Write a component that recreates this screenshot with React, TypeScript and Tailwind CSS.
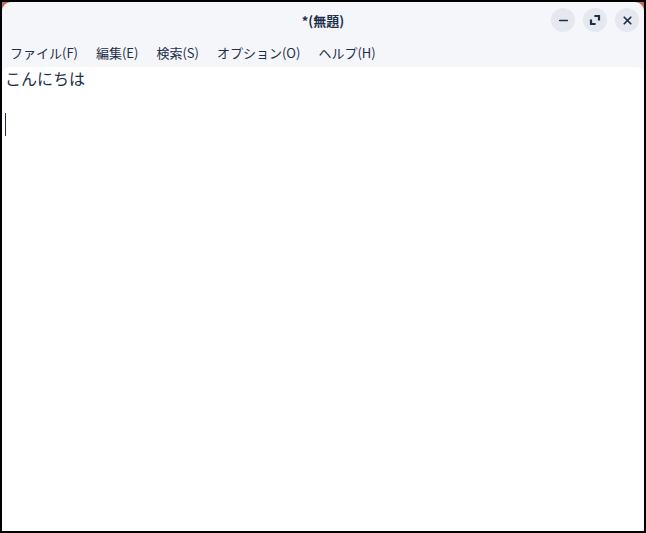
import { Minus, X } from "lucide-react";

const font = { fontFamily: '"Noto Sans CJK JP", "Noto Sans", sans-serif' };

const menus = ["ファイル(F)", "編集(E)", "検索(S)", "オプション(O)", "ヘルプ(H)"];

function RestoreIcon() {
  return (
    <svg width="12" height="12" viewBox="0 0 12 12" fill="none" stroke="#1c2f4a" strokeWidth="2.2" strokeLinecap="square">
      <path d="M6.5 2H10V5.5" />
      <path d="M2 6.5V10H5.5" />
    </svg>
  );
}

function WindowButton({ children }: { children: React.ReactNode }) {
  return (
    <button className="flex h-6 w-6 items-center justify-center rounded-full bg-[#e5e8ef]" type="button">
      {children}
    </button>
  );
}

export default function App() {
  return (
    <div className="relative h-[533px] w-[646px] overflow-hidden bg-black p-[2px]" style={font}>
      <div className="absolute left-[2px] top-[2px] h-3 w-3 bg-[#c86b4b]" />
      <div className="absolute right-[2px] top-[2px] h-3 w-3 bg-[#c86b4b]" />
      <div className="relative flex h-full flex-col overflow-hidden rounded-t-[9px] bg-[#f5f6fa]">
        <div className="relative flex h-[38px] shrink-0 items-center justify-center">
          <span className="text-[13px] font-bold text-[#1c2f4a]">*(無題)</span>
          <div className="absolute right-[5px] top-[6px] flex gap-2">
            <WindowButton><Minus size={13} strokeWidth={3} color="#1c2f4a" /></WindowButton>
            <WindowButton><RestoreIcon /></WindowButton>
            <WindowButton><X size={13} strokeWidth={3.2} color="#1c2f4a" /></WindowButton>
          </div>
        </div>
        <div className="flex h-[27px] shrink-0 items-start gap-[18px] pl-2 pt-[3px] text-[13px] text-[#1c2f4a]">
          {menus.map((m) => (
            <span key={m}>{m}</span>
          ))}
        </div>
        <div className="flex-1 rounded-t-[8px] rounded-br-[6px] bg-white pl-[3px] text-[16px] leading-[23px] text-[#1c2f4a]">
          <div>こんにちは</div>
          <div>&nbsp;</div>
          <div className="h-[23px]">
            <div className="h-[23px] w-px bg-[#1c2f4a]" />
          </div>
        </div>
      </div>
    </div>
  );
}
